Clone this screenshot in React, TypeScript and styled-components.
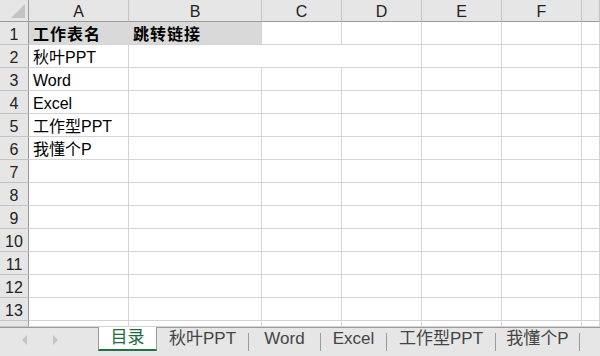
import React from 'react';
import styled, { createGlobalStyle } from 'styled-components';

const COLS = '29px 100px 133px 80px 80px 80px 80px 1fr';
const LETTERS = ['A', 'B', 'C', 'D', 'E', 'F', ''];
const SHEETS = ['秋叶PPT', 'Word', 'Excel', '工作型PPT', '我懂个P'];
const TAB_WIDTHS = [91, 71, 65, 108, 83];

type RowData = {
  cells: string[];
  bold?: boolean;
  fill?: boolean;
  openRight?: number[];
};

const rows: RowData[] = [
  { cells: ['工作表名', '跳转链接'], bold: true, fill: true },
  { cells: ['秋叶PPT'], openRight: [1, 2] },
  { cells: ['Word'] },
  { cells: ['Excel'] },
  { cells: ['工作型PPT'] },
  { cells: ['我懂个P'] },
  { cells: [] },
  { cells: [] },
  { cells: [] },
  { cells: [] },
  { cells: [] },
  { cells: [] },
  { cells: [] },
];

const GlobalStyle = createGlobalStyle`
  html, body {
    margin: 0;
    padding: 0;
    background: #ffffff;
  }
  body {
    font-family: "Liberation Sans", "Noto Sans CJK SC", sans-serif;
  }
`;

const App = () => {
  return (
    <>
      <GlobalStyle />
      <Window>
        <Sheet>
          <Row $h={22}>
            <Corner>
              <svg width="28" height="21" viewBox="0 0 28 21">
                <polygon points="25,4 25,18 11,18" fill="#c3c3c3" />
              </svg>
            </Corner>
            {LETTERS.map((l, i) => (
              <ColHead key={i}>{l}</ColHead>
            ))}
          </Row>

          {rows.map((row, r) => (
            <Row $h={23} key={r}>
              <RowHead>{r + 1}</RowHead>
              {LETTERS.map((_, c) => {
                const text = row.cells[c];
                const filled = !!row.fill && c < 2;
                return (
                  <Cell
                    key={c}
                    $bold={!!row.bold}
                    $fill={filled}
                    $openRight={(row.openRight || []).includes(c) || (filled && c === 0)}
                  >
                    {text}
                  </Cell>
                );
              })}
            </Row>
          ))}

          <Row $h={6}>
            <RowHead />
            {LETTERS.map((_, c) => (
              <Cell key={c} $bold={false} $fill={false} $openRight={false} />
            ))}
          </Row>
        </Sheet>

        <TabBar>
          <Nav>
            <svg width="8" height="12" viewBox="0 0 8 12">
              <polygon points="6,1 6,11 1,6" fill="#c3c3c3" />
            </svg>
            <svg width="8" height="12" viewBox="0 0 8 12">
              <polygon points="2,1 2,11 7,6" fill="#c3c3c3" />
            </svg>
          </Nav>
          <Tabs>
            <ActiveTab>目录</ActiveTab>
            {SHEETS.map((s, i) => (
              <React.Fragment key={s}>
                {i > 0 && <Sep />}
                <Tab $w={TAB_WIDTHS[i]}>{s}</Tab>
              </React.Fragment>
            ))}
            <Sep />
          </Tabs>
        </TabBar>
      </Window>
    </>
  );
};

const Window = styled.div`
  width: 600px;
  height: 356px;
  display: flex;
  flex-direction: column;
  overflow: hidden;
  background: #ffffff;
`;

const Sheet = styled.div`
  flex: 1;
  display: flex;
  flex-direction: column;
  overflow: hidden;
`;

const Row = styled.div<{ $h: number }>`
  display: grid;
  grid-template-columns: ${COLS};
  grid-template-rows: ${(p) => p.$h}px;
  height: ${(p) => p.$h}px;
  flex-shrink: 0;
  overflow: hidden;
`;

const ColHead = styled.div`
  box-sizing: border-box;
  height: 100%;
  background: #e6e6e6;
  border-bottom: 1px solid #9b9b9b;
  border-right: 1px solid #c4c4c4;
  display: flex;
  align-items: center;
  justify-content: center;
  padding-top: 2px;
  font-family: "Liberation Sans", sans-serif;
  font-size: 16px;
  line-height: 16px;
  color: #222222;
`;

const Corner = styled(ColHead)`
  border-right: 1px solid #9b9b9b;
  padding: 0;
  align-items: stretch;
  justify-content: stretch;
`;

const RowHead = styled.div`
  box-sizing: border-box;
  height: 100%;
  background: #e6e6e6;
  border-right: 1px solid #9b9b9b;
  border-bottom: 1px solid #c4c4c4;
  display: flex;
  align-items: center;
  justify-content: center;
  padding-top: 3px;
  font-family: "Liberation Sans", sans-serif;
  font-size: 16px;
  line-height: 16px;
  color: #222222;
  overflow: hidden;
`;

const Cell = styled.div<{ $bold: boolean; $fill: boolean; $openRight: boolean }>`
  box-sizing: border-box;
  height: 100%;
  background: ${(p) => (p.$fill ? '#d9d9d9' : '#ffffff')};
  border-right: 1px solid ${(p) => (p.$openRight ? (p.$fill ? '#d9d9d9' : '#ffffff') : '#d4d4d4')};
  border-bottom: 1px solid #d4d4d4;
  display: flex;
  align-items: center;
  padding: 3px 3px 0 4px;
  font-family: "Liberation Sans", "Noto Sans CJK SC", sans-serif;
  font-size: 16px;
  line-height: 18px;
  letter-spacing: ${(p) => (p.$bold ? '1px' : '0')};
  font-weight: ${(p) => (p.$bold ? 700 : 400)};
  color: #000000;
  white-space: nowrap;
  overflow: visible;
  min-width: 0;
`;

const TabBar = styled.div`
  height: 29px;
  flex-shrink: 0;
  box-sizing: border-box;
  border-top: 1px solid #9b9b9b;
  background: #e6e6e6;
  display: flex;
`;

const Nav = styled.div`
  width: 98px;
  flex-shrink: 0;
  display: flex;
  align-items: center;
  gap: 22px;
  padding: 0 0 4px 21px;
  box-sizing: border-box;
`;

const Tabs = styled.div`
  display: flex;
  align-items: flex-start;
`;

const Tab = styled.div<{ $w: number }>`
  width: ${(p) => p.$w}px;
  height: 22px;
  display: flex;
  align-items: center;
  justify-content: center;
  font-family: "Liberation Sans", "Noto Sans CJK SC", sans-serif;
  font-size: 17px;
  line-height: 18px;
  color: #444444;
  white-space: nowrap;
`;

const ActiveTab = styled.div`
  width: 59px;
  height: 24px;
  margin-top: -1px;
  box-sizing: border-box;
  background: #ffffff;
  border-left: 1px solid #9b9b9b;
  border-right: 1px solid #9b9b9b;
  border-bottom: 2px solid #217346;
  display: flex;
  align-items: center;
  justify-content: center;
  padding-bottom: 1px;
  font-family: "Liberation Sans", "Noto Sans CJK SC", sans-serif;
  font-size: 17px;
  line-height: 18px;
  color: #1e6b40;
`;

const Sep = styled.div`
  width: 1px;
  height: 18px;
  margin-top: 5px;
  background: #9b9b9b;
  flex-shrink: 0;
`;

export default App;
